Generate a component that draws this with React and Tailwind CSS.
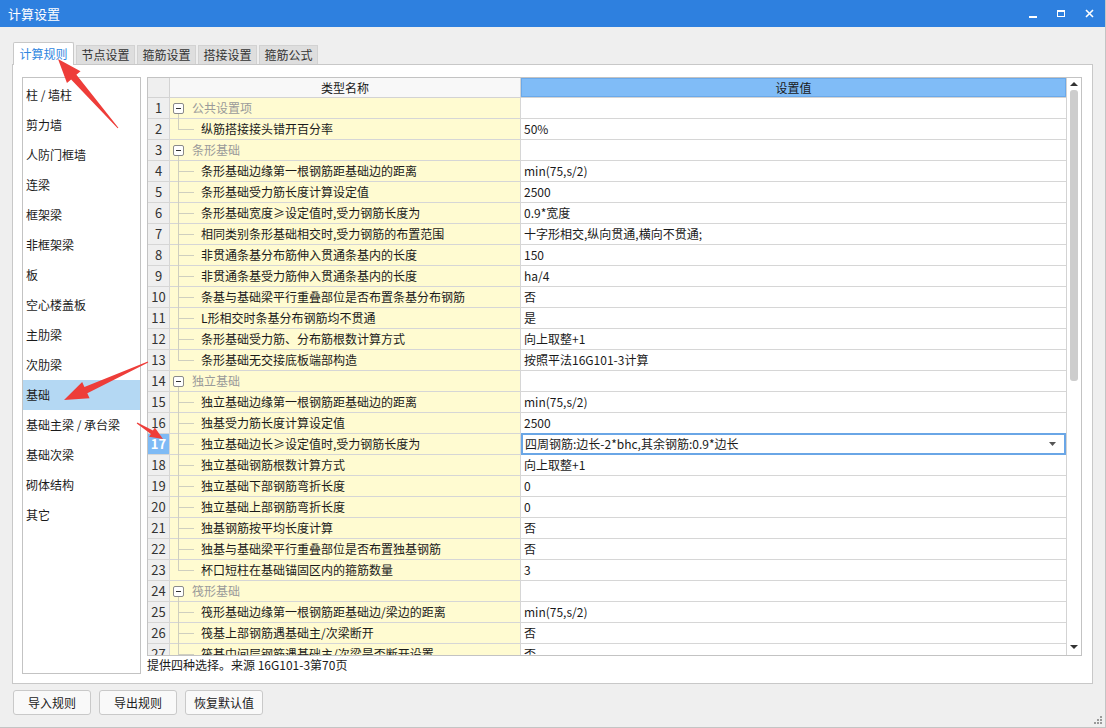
import React from 'react'

const FONT = { fontFamily: "'Noto Sans CJK SC', 'Microsoft YaHei', sans-serif" }

const TABS = ['计算规则', '节点设置', '箍筋设置', '搭接设置', '箍筋公式']

const SIDE = [
  '柱 / 墙柱', '剪力墙', '人防门框墙', '连梁', '框架梁', '非框架梁', '板', '空心楼盖板',
  '主肋梁', '次肋梁', '基础', '基础主梁 / 承台梁', '基础次梁', '砌体结构', '其它',
]

// g: group row, last: last child of its group
const ROWS = [
  { g: true, name: '公共设置项' },
  { name: '纵筋搭接接头错开百分率', val: '50%', last: true },
  { g: true, name: '条形基础' },
  { name: '条形基础边缘第一根钢筋距基础边的距离', val: 'min(75,s/2)' },
  { name: '条形基础受力筋长度计算设定值', val: '2500' },
  { name: '条形基础宽度≥设定值时,受力钢筋长度为', val: '0.9*宽度' },
  { name: '相同类别条形基础相交时,受力钢筋的布置范围', val: '十字形相交,纵向贯通,横向不贯通;' },
  { name: '非贯通条基分布筋伸入贯通条基内的长度', val: '150' },
  { name: '非贯通条基受力筋伸入贯通条基内的长度', val: 'ha/4' },
  { name: '条基与基础梁平行重叠部位是否布置条基分布钢筋', val: '否' },
  { name: 'L形相交时条基分布钢筋均不贯通', val: '是' },
  { name: '条形基础受力筋、分布筋根数计算方式', val: '向上取整+1' },
  { name: '条形基础无交接底板端部构造', val: '按照平法16G101-3计算', last: true },
  { g: true, name: '独立基础' },
  { name: '独立基础边缘第一根钢筋距基础边的距离', val: 'min(75,s/2)' },
  { name: '独基受力筋长度计算设定值', val: '2500' },
  { name: '独立基础边长≥设定值时,受力钢筋长度为', val: '四周钢筋:边长-2*bhc,其余钢筋:0.9*边长', sel: true },
  { name: '独立基础钢筋根数计算方式', val: '向上取整+1' },
  { name: '独立基础下部钢筋弯折长度', val: '0' },
  { name: '独立基础上部钢筋弯折长度', val: '0' },
  { name: '独基钢筋按平均长度计算', val: '否' },
  { name: '独基与基础梁平行重叠部位是否布置独基钢筋', val: '否' },
  { name: '杯口短柱在基础锚固区内的箍筋数量', val: '3', last: true },
  { g: true, name: '筏形基础' },
  { name: '筏形基础边缘第一根钢筋距基础边/梁边的距离', val: 'min(75,s/2)' },
  { name: '筏基上部钢筋遇基础主/次梁断开', val: '否' },
  { name: '筏基中间层钢筋遇基础主/次梁是否断开设置', val: '否' },
]

function arrowPoints([tx, ty], [px, py], head = 22, hw = 10, sw = 3.5) {
  const dx = px - tx, dy = py - ty
  const len = Math.hypot(dx, dy)
  const ux = dx / len, uy = dy / len
  const nx = -uy, ny = ux
  const bx = px - ux * head, by = py - uy * head
  const pts = [
    [tx + nx * 0.5, ty + ny * 0.5],
    [bx + nx * sw, by + ny * sw],
    [bx + nx * hw, by + ny * hw],
    [px, py],
    [bx - nx * hw, by - ny * hw],
    [bx - nx * sw, by - ny * sw],
    [tx - nx * 0.5, ty - ny * 0.5],
  ]
  return pts.map((p) => p.join(',')).join(' ')
}

function TreeCell({ row }) {
  if (row.g) {
    return (
      <div className="relative h-full flex items-center">
        <div className="absolute left-[3px] top-[5px] w-[11px] h-[11px] border border-[#8a8a8a] rounded-[2px] bg-white flex items-center justify-center">
          <div className="w-[5px] h-px bg-[#333]" />
        </div>
        <div className="absolute left-[8px] top-[16px] bottom-[-1px] w-px bg-[#cfcfbf]" />
        <span className="pl-[22px] text-[#9a9a9a]">{row.name}</span>
      </div>
    )
  }
  return (
    <div className="relative h-full flex items-center">
      <div className={`absolute left-[8px] top-0 w-px bg-[#cfcfbf] ${row.last ? 'h-[10px]' : 'bottom-[-1px]'}`} />
      <div className="absolute left-[8px] top-[10px] w-[16px] h-px bg-[#cfcfbf]" />
      <span className="pl-[31px] text-[#1a1a1a] whitespace-nowrap">{row.name}</span>
    </div>
  )
}

export default function App() {
  return (
    <div
      className="relative w-[1106px] h-[728px] bg-[#efefef] flex flex-col border-r border-b border-[#c4c4c4] overflow-hidden text-[12px] text-[#1a1a1a]"
      style={FONT}
    >
      {/* Title bar */}
      <div className="h-[27px] bg-[#2e80df] flex items-center justify-between pl-2 text-white text-[13px] shrink-0">
        <span>计算设置</span>
        <div className="flex items-center h-full">
          <div className="w-[28px] flex justify-center"><div className="w-[8px] h-[2px] bg-white mt-[6px]" /></div>
          <div className="w-[28px] flex justify-center"><div className="w-[8px] h-[7px] border border-white border-t-2" /></div>
          <div className="w-[28px] flex justify-center mr-[2px]">
            <svg width="9" height="9" viewBox="0 0 9 9"><path d="M1 1L8 8M8 1L1 8" stroke="white" strokeWidth="1.6" /></svg>
          </div>
        </div>
      </div>

      {/* Tabs */}
      <div className="flex items-end gap-[2px] pl-[13px] mt-[15px] h-[22px] relative z-10">
        {TABS.map((t, i) =>
          i === 0 ? (
            <div key={t} className="h-[23px] mb-[-1px] w-[61px] bg-white border border-b-0 border-[#c8c8c8] rounded-t-[2px] flex items-center justify-center text-[#2f86e0]">
              {t}
            </div>
          ) : (
            <div key={t} className="h-[19px] w-[59px] bg-[#dedede] border border-b-0 border-[#d2d2d2] flex items-center justify-center text-[#333]">
              {t}
            </div>
          )
        )}
      </div>

      {/* Panel */}
      <div className="mx-[12px] h-[620px] bg-white border border-[#c8c8c8] flex gap-[6px] pl-[9px] pr-[10px] pt-[12px] pb-[9px]">
        {/* Side list */}
        <div className="w-[119px] border border-[#c3c3c3] pt-[2px] flex flex-col">
          {SIDE.map((s) => (
            <div
              key={s}
              className={`h-[30px] flex items-center pl-[3px] ${s === '基础' ? 'bg-[#b4d8f3]' : ''}`}
            >
              {s}
            </div>
          ))}
        </div>

        {/* Grid */}
        <div className="flex-1 flex flex-col">
          <div className="h-[579px] border border-[#c3c3c3] flex overflow-hidden">
            <div className="flex-1 flex flex-col overflow-hidden">
              {/* Header */}
              <div className="flex h-[20px] shrink-0 border-b border-[#d3d3d3]">
                <div className="w-[22px] bg-[#efefef] border-r border-[#d3d3d3]" />
                <div className="w-[351px] bg-[#f8f8f8] border-r border-[#d3d3d3] flex items-center justify-center">类型名称</div>
                <div className="flex-1 bg-[#80bcf7] border border-[#6aa9ea] flex items-center justify-center">设置值</div>
              </div>
              {ROWS.map((r, i) => (
                <div key={i} className="flex h-[21px] shrink-0 border-b border-[#d6d6d6]">
                  <div
                    className={`w-[22px] flex items-center justify-center border-r border-[#d6d6d6] text-[13px] ${
                      r.sel ? 'bg-[#7ebaf5] text-white font-bold' : 'bg-[#efefef] text-[#333]'
                    }`}
                  >
                    {i + 1}
                  </div>
                  <div className="w-[351px] bg-[#fffbd1] border-r border-[#d6d6d6]">
                    <TreeCell row={r} />
                  </div>
                  {r.sel ? (
                    <div className="flex-1 border-2 border-[#6aa6e6] mt-[-1px] mb-[-1px] flex items-center justify-between pl-[2px] pr-[8px] bg-white relative z-[1]">
                      <span>{r.val}</span>
                      <svg width="7" height="4" viewBox="0 0 7 4"><path d="M0 0H7L3.5 4Z" fill="#555" /></svg>
                    </div>
                  ) : (
                    <div className="flex-1 flex items-center pl-[3px] whitespace-nowrap">{r.val || ''}</div>
                  )}
                </div>
              ))}
            </div>
            {/* Scrollbar */}
            <div className="w-[15px] border-l border-[#d3d3d3] flex flex-col items-center shrink-0">
              <svg className="mt-[4px]" width="8" height="4" viewBox="0 0 8 4"><path d="M0 4H8L4 0Z" fill="#333" /></svg>
              <div className="w-[8px] h-[291px] bg-[#cdcdcd] rounded-[3px] mt-[4px]" />
              <div className="flex-1" />
              <svg className="mb-[6px]" width="8" height="4" viewBox="0 0 8 4"><path d="M0 0H8L4 4Z" fill="#333" /></svg>
            </div>
          </div>
          <div className="h-[17px] flex items-center">提供四种选择。来源 16G101-3第70页</div>
        </div>
      </div>

      {/* Buttons */}
      <div className="flex gap-[8px] pl-[13px] mt-[6px]">
        {['导入规则', '导出规则', '恢复默认值'].map((b) => (
          <div key={b} className="w-[78px] h-[25px] bg-[#f9f9f9] border border-[#c9c9c9] rounded-[3px] flex items-center justify-center text-[#222]">
            {b}
          </div>
        ))}
      </div>

      {/* Resize grip */}
      <svg className="absolute right-[3px] bottom-[3px]" width="8" height="8" viewBox="0 0 8 8">
        {[[6, 0], [3, 3], [6, 3], [0, 6], [3, 6], [6, 6]].map(([x, y], i) => (
          <rect key={i} x={x} y={y} width="2" height="2" fill="#9a9a9a" />
        ))}
      </svg>

      {/* Annotation arrows */}
      <svg className="absolute inset-0 pointer-events-none z-20" width="1106" height="728">
        <polygon points={arrowPoints([118, 128], [58, 59], 24, 9, 3.5)} fill="#ee3d39" />
        <polygon points={arrowPoints([148, 362], [64, 400], 24, 9, 3.5)} fill="#ee3d39" />
        <polygon points={arrowPoints([137, 423], [163, 439], 13, 5.5, 2)} fill="#ee3d39" />
      </svg>
    </div>
  )
}
